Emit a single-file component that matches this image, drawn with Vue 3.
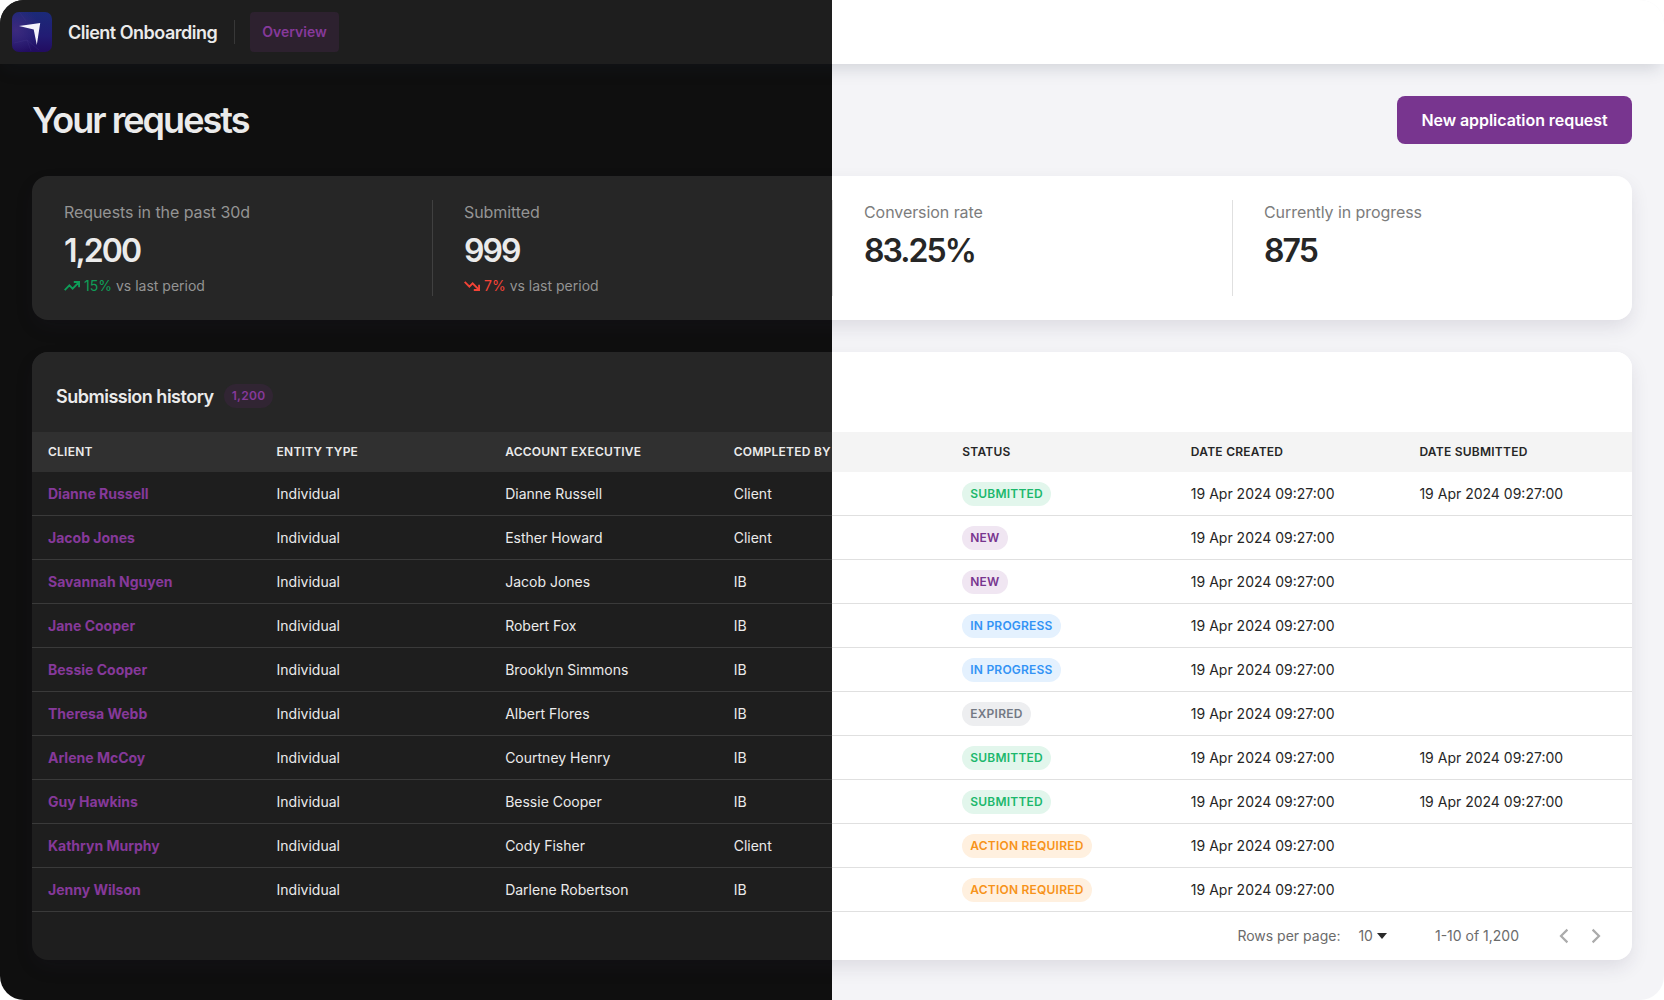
<script setup>
const stats = [
  { label: 'Requests in the past 30d', value: '1,200', trend: 'up', delta: '15%' },
  { label: 'Submitted', value: '999', trend: 'down', delta: '7%' },
  { label: 'Conversion rate', value: '83.25%' },
  { label: 'Currently in progress', value: '875' },
]

const columns = ['Client', 'Entity type', 'Account executive', 'Completed by', 'Status', 'Date created', 'Date submitted']

const date = '19 Apr 2024 09:27:00'
const rows = [
  { client: 'Dianne Russell', executive: 'Dianne Russell', by: 'Client', status: 'Submitted', submitted: date },
  { client: 'Jacob Jones', executive: 'Esther Howard', by: 'Client', status: 'New' },
  { client: 'Savannah Nguyen', executive: 'Jacob Jones', by: 'IB', status: 'New' },
  { client: 'Jane Cooper', executive: 'Robert Fox', by: 'IB', status: 'In progress' },
  { client: 'Bessie Cooper', executive: 'Brooklyn Simmons', by: 'IB', status: 'In progress' },
  { client: 'Theresa Webb', executive: 'Albert Flores', by: 'IB', status: 'Expired' },
  { client: 'Arlene McCoy', executive: 'Courtney Henry', by: 'IB', status: 'Submitted', submitted: date },
  { client: 'Guy Hawkins', executive: 'Bessie Cooper', by: 'IB', status: 'Submitted', submitted: date },
  { client: 'Kathryn Murphy', executive: 'Cody Fisher', by: 'Client', status: 'Action required' },
  { client: 'Jenny Wilson', executive: 'Darlene Robertson', by: 'IB', status: 'Action required' },
]

const statusClass = (status) => 'badge--' + status.toLowerCase().replace(' ', '-')
</script>

<template>
  <div class="page">
    <header class="topbar">
      <svg class="logo" width="40" height="40" viewBox="0 0 40 40">
        <defs>
          <linearGradient id="logo-fill" x1="0" y1="0" x2="0" y2="1">
            <stop offset="0" stop-color="#1b2a78" />
            <stop offset="0.6" stop-color="#221c74" />
            <stop offset="1" stop-color="#220c60" />
          </linearGradient>
          <radialGradient id="logo-glow" cx="0.1" cy="0.45" r="0.6">
            <stop offset="0" stop-color="#3c2a7e" />
            <stop offset="1" stop-color="#3c2a7e" stop-opacity="0" />
          </radialGradient>
        </defs>
        <rect width="40" height="40" rx="7" fill="url(#logo-fill)" />
        <rect width="40" height="40" rx="7" fill="url(#logo-glow)" />
        <path d="M2 31 15 28 27 38M15 28 19 39M8 1 14 9" fill="none" stroke="#5a4a9c" stroke-opacity="0.3" stroke-width="0.6" />
        <path d="M7 14.1 28.2 10.9 24.8 33 21.7 17.5Z" fill="#f4f2fb" />
      </svg>
      <span class="app-name">Client Onboarding</span>
      <span class="topbar-divider"></span>
      <a class="tab">Overview</a>
    </header>

    <main class="content">
      <div class="heading">
        <h1>Your requests</h1>
        <button class="primary">New application request</button>
      </div>

      <section class="card stats">
        <div v-for="stat in stats" :key="stat.label" class="stat">
          <div class="stat-label">{{ stat.label }}</div>
          <div class="stat-value">{{ stat.value }}</div>
          <div v-if="stat.trend" class="stat-trend" :class="stat.trend">
            <svg width="16" height="16" viewBox="0 0 16 16">
              <path v-if="stat.trend === 'up'" d="M.7 12.1 5.4 7.4l3.2 3.2L14.6 4.6M9.8 4H15.1v5.3" />
              <path v-else d="M.7 3.9 5.4 8.6l3.2-3.2 6 6M9.8 12H15.1V6.7" />
            </svg>
            <span class="delta">{{ stat.delta }}</span>
            <span class="versus">vs last period</span>
          </div>
        </div>
      </section>

      <section class="card table-card">
        <div class="table-title">
          <h2>Submission history</h2>
          <span class="count">1,200</span>
        </div>
        <div class="row table-head">
          <div v-for="column in columns" :key="column" class="cell">{{ column }}</div>
        </div>
        <div v-for="row in rows" :key="row.client" class="row">
          <div class="cell client">{{ row.client }}</div>
          <div class="cell">Individual</div>
          <div class="cell">{{ row.executive }}</div>
          <div class="cell">{{ row.by }}</div>
          <div class="cell light"><span class="badge" :class="statusClass(row.status)">{{ row.status }}</span></div>
          <div class="cell light">{{ date }}</div>
          <div class="cell light">{{ row.submitted }}</div>
        </div>
        <footer class="pagination">
          <span class="per-page">Rows per page:</span>
          <span class="page-size">10
            <svg width="10" height="6" viewBox="0 0 10 6"><path d="M0 0h10L5 6z" fill="#2a2a2a" /></svg>
          </span>
          <span class="range">1-10 of 1,200</span>
          <span class="arrows">
            <svg width="32" height="24" viewBox="0 0 32 24"><path d="M19.4 5.6 13 12l6.4 6.4" /></svg>
            <svg width="32" height="24" viewBox="0 0 32 24"><path d="M12.6 5.6 19 12l-6.4 6.4" /></svg>
          </span>
        </footer>
      </section>
    </main>
  </div>
</template>

<style>
body {
  background: #fff;
}
</style>

<style scoped>
* {
  box-sizing: border-box;
}

.page {
  width: 1664px;
  height: 1000px;
  overflow: hidden;
  border-radius: 24px;
  background: linear-gradient(90deg, #0f0f0f 50%, #f4f4f7 50%);
  font-family: Inter, "Liberation Sans", sans-serif;
  font-size: 14px;
  color: #ebebeb;
}

.topbar {
  position: relative;
  display: flex;
  align-items: center;
  height: 64px;
  padding-left: 12px;
  background: linear-gradient(90deg, #1e1e1e 50%, #fff 50%);
  box-shadow: 0 8px 16px -4px rgba(29, 42, 66, 0.17);
}

.app-name {
  width: 150px;
  margin-left: 16px;
  font-size: 18px;
  font-weight: 600;
  letter-spacing: -0.5px;
  white-space: nowrap;
}

.topbar-divider {
  width: 1px;
  height: 24px;
  margin: 0 15px 0 16px;
  background: #383838;
}

.tab {
  width: 89px;
  height: 40px;
  border-radius: 4px;
  background: #2d212f;
  color: #86399a;
  font-weight: 600;
  line-height: 40px;
  text-align: center;
}

.content {
  display: flex;
  flex-direction: column;
  gap: 32px;
  padding: 32px;
}

.heading {
  display: flex;
  align-items: center;
  justify-content: space-between;
  height: 48px;
}

h1 {
  margin: 0;
  font-size: 36px;
  font-weight: 600;
  letter-spacing: -1.95px;
}

.primary {
  width: 235px;
  height: 48px;
  padding: 0;
  border: 0;
  border-radius: 8px;
  background: #78358f;
  color: #fff;
  font: 600 16px Inter, "Liberation Sans", sans-serif;
  letter-spacing: -0.06px;
}

.card {
  border-radius: 16px;
  overflow: hidden;
  box-shadow: 0 8px 20px -2px rgba(40, 36, 68, 0.12);
}

.stats {
  display: grid;
  grid-template-columns: repeat(4, 1fr);
  height: 144px;
  padding: 24px 0;
  background: linear-gradient(90deg, #262626 50%, #fff 50%);
}

.stat {
  padding-left: 32px;
  box-shadow: inset 1px 0 #404040;
}

.stat:first-child {
  box-shadow: none;
}

.stat:nth-child(n + 3) {
  box-shadow: inset 1px 0 #e0e0e0;
}

.stat-label {
  color: #949494;
  font-size: 16px;
  letter-spacing: -0.07px;
  line-height: 24px;
}

.stat-value {
  margin-top: 7px;
  font-size: 32px;
  font-weight: 600;
  letter-spacing: -1.95px;
  line-height: 40px;
}

.stat:nth-child(n + 3) .stat-label {
  color: #7c7c7c;
}

.stat:nth-child(n + 3) .stat-value {
  color: #262626;
}

.stat-trend {
  display: flex;
  align-items: center;
  margin-top: 5px;
  line-height: 20px;
}

.stat-trend path {
  fill: none;
  stroke: currentColor;
  stroke-width: 1.9;
}

.up {
  color: #0f9d58;
}

.down {
  color: #f44336;
}

.delta {
  margin-left: 4px;
}

.versus {
  margin-left: 4px;
  color: #949494;
}

.table-card {
  height: 608px;
  background: linear-gradient(90deg, #1e1e1e 50%, #fff 50%);
}

.table-title {
  display: flex;
  align-items: center;
  height: 80px;
  padding: 8px 24px 0;
  background: linear-gradient(90deg, #262626 50%, #fff 50%);
}

h2 {
  margin: 0;
  font-size: 18px;
  font-weight: 600;
  letter-spacing: -0.5px;
}

.count {
  height: 24px;
  margin-left: 10px;
  padding: 0 8px;
  border-radius: 12px;
  background: #312533;
  color: #86399a;
  font-size: 12px;
  font-weight: 600;
  letter-spacing: 0.3px;
  line-height: 24px;
}

.row {
  display: grid;
  grid-template-columns: repeat(7, 1fr);
  align-items: center;
  height: 44px;
  border-bottom: 1px solid;
  border-image: linear-gradient(90deg, #3a3a3a 50%, #e0e0e0 50%) 1;
}

.cell {
  padding-left: 16px;
  white-space: nowrap;
}

.row .light {
  color: #262626;
}

.row .client {
  color: #86399a;
  font-weight: 700;
}

.table-head {
  height: 40px;
  padding-bottom: 2px;
  border: 0;
  background: linear-gradient(90deg, #303030 50%, #f4f4f4 50%);
  font-size: 12px;
  font-weight: 600;
  letter-spacing: 0.24px;
  text-transform: uppercase;
}

.table-head .cell:nth-child(n + 5) {
  color: #262626;
}

.badge {
  display: block;
  width: fit-content;
  height: 24px;
  margin-top: 1px;
  padding: 0 8px;
  border-radius: 12px;
  font-size: 12px;
  font-weight: 600;
  letter-spacing: 0.22px;
  line-height: 23px;
  text-transform: uppercase;
}

.badge--submitted {
  background: #e2f6ec;
  color: #1cb86c;
}

.badge--new {
  background: #f0e6f2;
  color: #78358f;
}

.badge--in-progress {
  background: #e4f1fe;
  color: #3393f5;
}

.badge--expired {
  background: #edeef0;
  color: #737984;
}

.badge--action-required {
  background: #fff0df;
  color: #f7931a;
}

.pagination {
  display: flex;
  align-items: center;
  justify-content: flex-end;
  height: 48px;
  padding-right: 20px;
  color: #6b6b6b;
}

.per-page,
.page-size,
.range {
  padding-bottom: 2px;
}

.page-size {
  display: flex;
  align-items: center;
  gap: 4px;
  margin: 0 48px 0 18px;
}

.page-size svg {
  margin-top: 2px;
}

.arrows {
  display: flex;
  margin-left: 29px;
}

.arrows path {
  fill: none;
  stroke: #ababab;
  stroke-width: 2.2;
}
</style>
